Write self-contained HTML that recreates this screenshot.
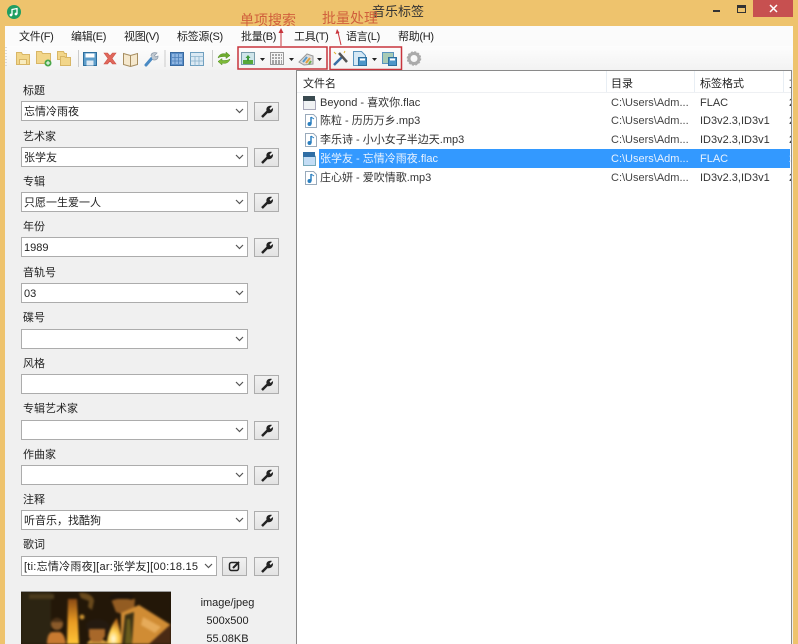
<!DOCTYPE html>
<html><head><meta charset="utf-8"><style>
html,body{margin:0;padding:0}
body{width:798px;height:644px;position:relative;overflow:hidden;background:#eec36d;font-family:"Liberation Sans","Noto Sans CJK SC",sans-serif;font-size:11px;color:#222}
#w{position:absolute;left:0;top:0;width:798px;height:644px;overflow:hidden;background:#eec36d;filter:blur(.35px)}
.a{position:absolute;white-space:nowrap}
.t{position:absolute;white-space:nowrap;line-height:14px;height:14px}
.c{position:absolute;left:21px;width:225px;height:18px;background:#fff;border:1px solid #acacac;line-height:20px;text-indent:2px;overflow:hidden;white-space:nowrap}
.c svg{position:absolute;right:3px;top:6px}
.b{position:absolute;left:254px;width:23px;height:17px;background:linear-gradient(#f1f1f1,#e3e3e3);border:1px solid #adadad}
.b svg{position:absolute;left:5px;top:2px}
.m{position:absolute;top:30px;line-height:14px;font-size:11px;letter-spacing:-.3px;color:#222;white-space:nowrap}
.h{position:absolute;top:77px;line-height:14px;color:#222;white-space:nowrap}
.r{position:absolute;left:320px;line-height:14px;white-space:nowrap;color:#333}
.d{position:absolute;left:611px;width:85px;overflow:hidden;line-height:14px;white-space:nowrap;color:#444}
.f{position:absolute;left:700px;line-height:14px;white-space:nowrap;color:#333}
.x{position:absolute;left:789px;width:2px;overflow:hidden;line-height:14px;color:#333}
.fi{position:absolute;left:305px}
</style></head><body><div id="w">
<!-- title bar -->
<svg class="a" style="left:7px;top:5px" width="14" height="14" viewBox="0 0 14 14"><circle cx="7" cy="7" r="7" fill="#1f9e62"/><path d="M5 10V4.500l5-1V9" fill="none" stroke="#fff" stroke-width="1.300"/><circle cx="4" cy="10" r="1.400" fill="#fff"/><circle cx="9" cy="9" r="1.400" fill="#fff"/></svg>
<div class="a" style="left:372px;top:3px;font-size:13px;line-height:18px;color:#333">音乐标签</div>
<div class="a" style="left:713px;top:10px;width:7px;height:2px;background:#333"></div>
<div class="a" style="left:737px;top:5px;width:7px;height:4px;border:1.500px solid #333;border-top-width:3px"></div>
<div class="a" style="left:753px;top:0;width:40px;height:17px;background:#c75050"></div>
<svg class="a" style="left:769px;top:4px" width="9" height="9"><path d="M1 1L8 8M8 1L1 8" stroke="#fff" stroke-width="1.500"/></svg>
<!-- window -->
<div class="a" style="left:5px;top:26px;width:788px;height:618px;background:#f0f0f0"></div>
<div class="a" style="left:5px;top:26px;width:788px;height:20px;background:#fbfbfb"></div>
<div class="a" style="left:5px;top:46px;width:788px;height:24px;background:linear-gradient(#fdfdfd,#f2f2f2)"></div>
<div class="m" style="left:19px">文件(F)</div>
<div class="m" style="left:71px">编辑(E)</div>
<div class="m" style="left:124px">视图(V)</div>
<div class="m" style="left:177px">标签源(S)</div>
<div class="m" style="left:241px">批量(B)</div>
<div class="m" style="left:294px">工具(T)</div>
<div class="m" style="left:346px">语言(L)</div>
<div class="m" style="left:398px">帮助(H)</div>
<!-- toolbar icons -->
<svg class="a" style="left:0;top:46px" width="430" height="24" viewBox="0 46 430 24">
<path d="M6 47V68" stroke="#bbb" stroke-dasharray="1 2"/>
<g fill="#f2d68a" stroke="#d8b666"><path d="M16.500 52.500h5l1 2h7v10h-13z"/><path d="M19.500 59.500h7v5h-7z" fill="#f8ecc0"/><path d="M36.500 51.500h5l1 2h8v10h-14z"/><path d="M57.500 51.500h6l1 2h2v6h-9z"/><path d="M60.500 56.500h4l1 1h5v8h-10z"/></g>
<circle cx="48" cy="63" r="3.500" fill="#4aa84a"/><path d="M46 63h4M48 61v4" stroke="#fff"/>
<path d="M78.500 50v17" stroke="#ccc"/>
<path d="M83.500 52.500h13v13h-13z" fill="#5e9ecb" stroke="#2e6f9e"/><path d="M85.500 53.500h9v4h-9z" fill="#fff"/><path d="M86.500 60.500h7v5h-7z" fill="#dfeaf3"/>
<path d="M104 53l3.500 0 2.500 3 2.500-3h3.500l-4 5.500 4 5.500h-3.500l-2.500-3-2.500 3h-3.500l4-5.500z" fill="#e0685c" stroke="#cc5046" stroke-width=".6"/>
<path d="M123.500 53.500l7 2 7-2v11l-7 2-7-2z" fill="#f5e8cd" stroke="#a68d60"/><path d="M130.500 55.500v11" stroke="#a68d60"/>
<path d="M146 65l6-7" stroke="#4a8ac4" stroke-width="3" stroke-linecap="round"/><path d="M151 56c0-3 3-4 6-3l-2.500 2.500 1 1.500 2.500-1c.5 3-3 5-5.500 3.500" fill="#c0c8d0" stroke="#8a98a8" stroke-width=".7"/>
<path d="M165 50v17" stroke="#ccc"/>
<path d="M170.500 52.500h13v13h-13z" fill="#5b8fc9" stroke="#38699f"/><path d="M172 54h10v10h-10z" fill="#8fb6e2"/><path d="M175 54v10M178.500 54v10M172 57.500h10M172 61h10" stroke="#4c7fb8" stroke-width=".8"/>
<path d="M190.500 52.500h13v13h-13z" fill="#dbe9f3" stroke="#6f9fbf"/><path d="M190.500 56.500h13M195 56.500v9M199 56.500v9M190.500 61h13" stroke="#8ab2cc" stroke-width=".8"/>
<path d="M212.500 50v17" stroke="#ccc"/>
<path d="M218 58c1-4 5-5 8-4v-2l4 3.500-4 3v-2c-3 0-6 0-8 1.500z" fill="#6dab2e" stroke="#4e8a1c" stroke-width=".5"/>
<path d="M230 59c-1 4-5 5-8 4v2l-4-3.500 4-3v2c3 0 6 0 8-1.500z" fill="#7dba38" stroke="#4e8a1c" stroke-width=".5"/>
<!-- group 1 -->
<path d="M241.500 52.500h13v12h-13z" fill="#cfe5ea" stroke="#7a9cab"/><path d="M243 60h10v4h-10z" fill="#57a83a"/><path d="M248 55l-2.500 3h1.500v3h2v-3h1.500z" fill="#3d9a3a"/>
<path d="M260 58h5l-2.500 3z" fill="#222"/>
<path d="M270.500 52.500h13v12h-13z" fill="#f4f4f4" stroke="#999"/><path d="M272 55h10M272 58h10M272 61h10M272 63h10" stroke="#555" stroke-dasharray="2 1"/>
<path d="M289 58h5l-2.500 3z" fill="#222"/>
<path d="M299 62l8-8 6 2v8l-9 1z" fill="#dcdcdc" stroke="#999"/><path d="M303 62l4-5" stroke="#5a9ac8" stroke-width="2"/><path d="M306 63l4-5" stroke="#e0a040" stroke-width="2"/><path d="M309 64l2-3" stroke="#6db04a" stroke-width="2"/>
<path d="M317 58h5l-2.500 3z" fill="#222"/>
<!-- group 2 -->
<path d="M334 65l9-9" stroke="#3a6ea5" stroke-width="2.500"/><path d="M339 53l8 9" stroke="#555" stroke-width="2.500"/><path d="M334 52l2 2M345 51l-1 2" stroke="#e0b030"/>
<path d="M353.500 51.500h8l4 4v10h-12z" fill="#d5e8f5" stroke="#5a94bf"/><path d="M358.500 57.500h8v8h-8z" fill="#4d96c9" stroke="#2e6f9e"/><path d="M360 58.500h5v2h-5z" fill="#fff"/>
<path d="M372 58h5l-2.500 3z" fill="#222"/>
<path d="M382.500 52.500h11v11h-11z" fill="#a8cbb5" stroke="#5a94bf"/><path d="M388.500 57.500h8v8h-8z" fill="#4d96c9" stroke="#2e6f9e"/><path d="M390 58.500h5v2h-5z" fill="#fff"/>
<circle cx="414" cy="58.500" r="5" fill="none" stroke="#aaa" stroke-width="3"/><circle cx="414" cy="58.500" r="6.500" fill="none" stroke="#aaa" stroke-width="1.500" stroke-dasharray="2 1.400"/>
<!-- red boxes -->
<path d="M238 47h89v22h-89zM330 47h71.500v22.500h-71.500z" fill="none" stroke="#c8343c" stroke-width="1.500"/>
</svg>
<!-- annotations -->
<div class="a" style="left:240px;top:11px;font-size:14px;line-height:18px;color:#d0603c">单项搜索</div>
<div class="a" style="left:322px;top:9px;font-size:14px;line-height:18px;color:#d0603c">批量处理</div>
<svg class="a" style="left:275px;top:26px" width="70" height="22"><path d="M6 20V5" stroke="#c8343c"/><path d="M6 2l-2.500 5h5z" fill="#c8343c"/><path d="M66 19L63 6" stroke="#c8343c"/><path d="M62 3l-1.500 5 4-1z" fill="#c8343c"/></svg>
<!-- left panel -->
<div class="t" style="left:23px;top:84px">标题</div>
<div class="c" style="top:101px">忘情冷雨夜<svg width="9" height="6"><path d="M1 1l3.500 3.500L8 1" fill="none" stroke="#555" stroke-width="1.200"/></svg></div>
<div class="b" style="top:102px"><svg width="14" height="13"><path d="M2 12l6-6" stroke="#222" stroke-width="2.500"/><path d="M7 7C5 3 8 0 12 1L9.500 3.500 10.500 5 13 3C13.500 7 10 9 7.500 8z" fill="#222"/></svg></div>
<div class="t" style="left:23px;top:130px">艺术家</div>
<div class="c" style="top:147px">张学友<svg width="9" height="6"><path d="M1 1l3.500 3.500L8 1" fill="none" stroke="#555" stroke-width="1.200"/></svg></div>
<div class="b" style="top:148px"><svg width="14" height="13"><path d="M2 12l6-6" stroke="#222" stroke-width="2.500"/><path d="M7 7C5 3 8 0 12 1L9.500 3.500 10.500 5 13 3C13.500 7 10 9 7.500 8z" fill="#222"/></svg></div>
<div class="t" style="left:23px;top:175px">专辑</div>
<div class="c" style="top:192px">只愿一生爱一人<svg width="9" height="6"><path d="M1 1l3.500 3.500L8 1" fill="none" stroke="#555" stroke-width="1.200"/></svg></div>
<div class="b" style="top:193px"><svg width="14" height="13"><path d="M2 12l6-6" stroke="#222" stroke-width="2.500"/><path d="M7 7C5 3 8 0 12 1L9.500 3.500 10.500 5 13 3C13.500 7 10 9 7.500 8z" fill="#222"/></svg></div>
<div class="t" style="left:23px;top:220px">年份</div>
<div class="c" style="top:237px">1989<svg width="9" height="6"><path d="M1 1l3.500 3.500L8 1" fill="none" stroke="#555" stroke-width="1.200"/></svg></div>
<div class="b" style="top:238px"><svg width="14" height="13"><path d="M2 12l6-6" stroke="#222" stroke-width="2.500"/><path d="M7 7C5 3 8 0 12 1L9.500 3.500 10.500 5 13 3C13.500 7 10 9 7.500 8z" fill="#222"/></svg></div>
<div class="t" style="left:23px;top:266px">音轨号</div>
<div class="c" style="top:283px">03<svg width="9" height="6"><path d="M1 1l3.500 3.500L8 1" fill="none" stroke="#555" stroke-width="1.200"/></svg></div>
<div class="t" style="left:23px;top:311px">碟号</div>
<div class="c" style="top:329px"><svg width="9" height="6"><path d="M1 1l3.500 3.500L8 1" fill="none" stroke="#555" stroke-width="1.200"/></svg></div>
<div class="t" style="left:23px;top:357px">风格</div>
<div class="c" style="top:374px"><svg width="9" height="6"><path d="M1 1l3.500 3.500L8 1" fill="none" stroke="#555" stroke-width="1.200"/></svg></div>
<div class="b" style="top:375px"><svg width="14" height="13"><path d="M2 12l6-6" stroke="#222" stroke-width="2.500"/><path d="M7 7C5 3 8 0 12 1L9.500 3.500 10.500 5 13 3C13.500 7 10 9 7.500 8z" fill="#222"/></svg></div>
<div class="t" style="left:23px;top:402px">专辑艺术家</div>
<div class="c" style="top:420px"><svg width="9" height="6"><path d="M1 1l3.500 3.500L8 1" fill="none" stroke="#555" stroke-width="1.200"/></svg></div>
<div class="b" style="top:421px"><svg width="14" height="13"><path d="M2 12l6-6" stroke="#222" stroke-width="2.500"/><path d="M7 7C5 3 8 0 12 1L9.500 3.500 10.500 5 13 3C13.500 7 10 9 7.500 8z" fill="#222"/></svg></div>
<div class="t" style="left:23px;top:448px">作曲家</div>
<div class="c" style="top:465px"><svg width="9" height="6"><path d="M1 1l3.500 3.500L8 1" fill="none" stroke="#555" stroke-width="1.200"/></svg></div>
<div class="b" style="top:466px"><svg width="14" height="13"><path d="M2 12l6-6" stroke="#222" stroke-width="2.500"/><path d="M7 7C5 3 8 0 12 1L9.500 3.500 10.500 5 13 3C13.500 7 10 9 7.500 8z" fill="#222"/></svg></div>
<div class="t" style="left:23px;top:493px">注释</div>
<div class="c" style="top:510px">听音乐，找酷狗<svg width="9" height="6"><path d="M1 1l3.500 3.500L8 1" fill="none" stroke="#555" stroke-width="1.200"/></svg></div>
<div class="b" style="top:511px"><svg width="14" height="13"><path d="M2 12l6-6" stroke="#222" stroke-width="2.500"/><path d="M7 7C5 3 8 0 12 1L9.500 3.500 10.500 5 13 3C13.500 7 10 9 7.500 8z" fill="#222"/></svg></div>
<div class="t" style="left:23px;top:538px">歌词</div>
<div class="c" style="top:556px;width:194px;letter-spacing:.25px">[ti:忘情冷雨夜][ar:张学友][00:18.15<div class="a" style="right:0;top:0;width:15px;height:18px;background:#fff"></div><svg width="9" height="6"><path d="M1 1l3.500 3.500L8 1" fill="none" stroke="#555" stroke-width="1.200"/></svg></div>
<div class="b" style="top:557px;left:222px"><svg width="14" height="13"><rect x="1.500" y="2.500" width="9" height="8" rx="2" fill="none" stroke="#222" stroke-width="1.500"/><path d="M5 8l6-6" stroke="#222" stroke-width="2"/></svg></div>
<div class="b" style="top:557px"><svg width="14" height="13"><path d="M2 12l6-6" stroke="#222" stroke-width="2.500"/><path d="M7 7C5 3 8 0 12 1L9.500 3.500 10.500 5 13 3C13.500 7 10 9 7.500 8z" fill="#222"/></svg></div>
<!-- cover -->
<div class="a" style="left:21px;top:591px;width:150px;height:53px;overflow:hidden;background:#241809">
<svg style="position:absolute;left:0;top:0;filter:blur(1.100px)" width="150" height="53" viewBox="0 0 150 53">
<defs><linearGradient id="g1" x1="0" y1="0" x2="0" y2="1"><stop offset="0" stop-color="#8a4a14"/><stop offset=".5" stop-color="#e89a22"/><stop offset="1" stop-color="#ffc438"/></linearGradient><radialGradient id="g2" cx=".4" cy=".8" r=".7"><stop offset="0" stop-color="#fffbe0"/><stop offset=".45" stop-color="#ffd050"/><stop offset="1" stop-color="#b86a18"/></radialGradient></defs>
<rect width="150" height="53" fill="#231708"/>
<path d="M0 0h30V53H0z" fill="#2c2412"/><path d="M8 3h25v5H8z" fill="#4a3a1c"/>
<path d="M47 8h9l2 45H46z" fill="url(#g1)"/>
<path d="M58 2c8-1 15 3 15 8l-2 9-4-3 1-6-8-3z" fill="#6a4a1c"/><circle cx="61" cy="26" r="2.500" fill="#c89030"/>
<path d="M26 53c0-8 2-11 5-12h8c4 2 5 6 6 12z" fill="#c87a30"/><circle cx="36" cy="33" r="6" fill="#8a5a2a"/><path d="M30 31c1-5 11-5 12 0z" fill="#4a3016"/>
<path d="M66 53c0-2 4-5 8-5 7 0 12 2 14 5z" fill="#d8a040"/><path d="M65 33c3-6 20-7 23 1v7H66z" fill="#241a10"/><path d="M68 38h16v7l-4 6h-9l-3-5z" fill="#a8682a"/>
<path d="M86 53c0-9 5-20 10-26l6 26z" fill="url(#g2)"/>
<path d="M90 8h24l-1 12-6 5-12-4z" fill="#935c22"/><path d="M88 6c6-5 20-6 25-1l-2 4c-7-2-15-2-21 1z" fill="#1e140a"/>
<path d="M100 22l18-8 32 20v19H100z" fill="#d08c34"/><path d="M104 24l9-3-2 32h-10z" fill="#3a3014"/><path d="M106 28l3 0 2 25h-7z" fill="#6a5c1c"/>
<path d="M128 53l22-20v20z" fill="#4a2a14"/><path d="M122 26l18 10-6 6-14-8z" fill="#e6ab5a"/>
</svg>
<div class="a" style="left:0;top:0;width:150px;height:1px;background:#999"></div>
</div>
<div class="a" style="left:170px;top:596px;width:115px;text-align:center;line-height:14px">image/jpeg</div>
<div class="a" style="left:170px;top:614px;width:115px;text-align:center;line-height:14px">500x500</div>
<div class="a" style="left:170px;top:632px;width:115px;text-align:center;line-height:14px">55.08KB</div>
<!-- list -->
<div class="a" style="left:296px;top:70px;width:496px;height:574px;background:#fff;border-top:1px solid #8a8a8a;border-left:1px solid #8a8a8a;box-sizing:border-box"></div>
<div class="a" style="left:791px;top:70px;width:1px;height:574px;background:#8a8a8a"></div>
<div class="a" style="left:606px;top:71px;width:1px;height:21px;background:#e8eef4"></div>
<div class="a" style="left:694px;top:71px;width:1px;height:21px;background:#e8eef4"></div>
<div class="a" style="left:783px;top:71px;width:1px;height:21px;background:#e8eef4"></div>
<div class="a" style="left:297px;top:92px;width:494px;height:1px;background:#eef0f3"></div>
<div class="h" style="left:303px">文件名</div><div class="h" style="left:611px">目录</div><div class="h" style="left:700px">标签格式</div><div class="x" style="top:77px">文</div>
<div class="a" style="left:319px;top:149px;width:471px;height:19px;background:#3399ff"></div>
<svg class="fi" style="left:303px;top:96px" width="13" height="14"><path d="M.5.500h8l4 4v9h-12z" fill="#f0f2f4" stroke="#aab"/><path d="M0 0h12v5H0z" fill="#3a4a50"/></svg>
<svg class="fi" style="left:305px;top:114px" width="12" height="14"><path d="M.5.500h8l3 3v10h-11z" fill="#fff" stroke="#9ab"/><path d="M6 3v7" stroke="#2a7fc0" stroke-width="1.500"/><circle cx="4.500" cy="10" r="2" fill="#2a7fc0"/><path d="M6 3l3 2" stroke="#2a7fc0"/></svg>
<svg class="fi" style="left:305px;top:133px" width="12" height="14"><path d="M.5.500h8l3 3v10h-11z" fill="#fff" stroke="#9ab"/><path d="M6 3v7" stroke="#2a7fc0" stroke-width="1.500"/><circle cx="4.500" cy="10" r="2" fill="#2a7fc0"/><path d="M6 3l3 2" stroke="#2a7fc0"/></svg>
<svg class="fi" style="left:303px;top:152px" width="13" height="14"><path d="M.5.500h8l4 4v9h-12z" fill="#c4ddf5" stroke="#7ab"/><path d="M0 0h12v5H0z" fill="#2f6ea5"/></svg>
<svg class="fi" style="left:305px;top:171px" width="12" height="14"><path d="M.5.500h8l3 3v10h-11z" fill="#fff" stroke="#9ab"/><path d="M6 3v7" stroke="#2a7fc0" stroke-width="1.500"/><circle cx="4.500" cy="10" r="2" fill="#2a7fc0"/><path d="M6 3l3 2" stroke="#2a7fc0"/></svg>
<div class="r" style="top:96px">Beyond - 喜欢你.flac</div>
<div class="r" style="top:114px">陈粒 - 历历万乡.mp3</div>
<div class="r" style="top:133px">李乐诗 - 小小女子半边天.mp3</div>
<div class="r" style="top:152px;color:#e8f2ff">张学友 - 忘情冷雨夜.flac</div>
<div class="r" style="top:171px">庄心妍 - 爱吹情歌.mp3</div>
<div class="d" style="top:96px">C:\Users\Adm...</div>
<div class="d" style="top:114px">C:\Users\Adm...</div>
<div class="d" style="top:133px">C:\Users\Adm...</div>
<div class="d" style="top:152px;color:#e8f2ff">C:\Users\Adm...</div>
<div class="d" style="top:171px">C:\Users\Adm...</div>
<div class="f" style="top:96px">FLAC</div>
<div class="f" style="top:114px">ID3v2.3,ID3v1</div>
<div class="f" style="top:133px">ID3v2.3,ID3v1</div>
<div class="f" style="top:152px;color:#e8f2ff">FLAC</div>
<div class="f" style="top:171px">ID3v2.3,ID3v1</div>
<div class="x" style="top:96px">2</div>
<div class="x" style="top:114px">2</div>
<div class="x" style="top:133px">2</div>
<div class="x" style="top:152px;color:#e8f2ff">2</div>
<div class="x" style="top:171px">2</div>
</div></body></html>
